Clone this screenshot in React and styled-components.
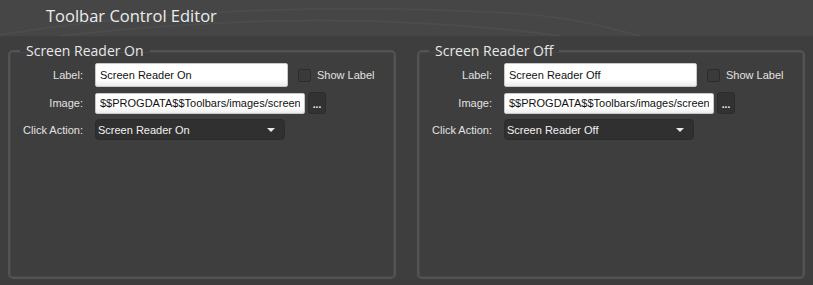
import React from "react";
import styled, { createGlobalStyle } from "styled-components";

const Global = createGlobalStyle`
  html, body {
    margin: 0;
    background: #3d3d3d;
  }
  body {
    font-family: "Open Sans", "DejaVu Sans", sans-serif;
    color: #e6e6e6;
  }
`;

const small = `"Liberation Sans", Arial, sans-serif`;

const panels = [
  {
    title: "Screen Reader On",
    label: "Screen Reader On",
    image: "$$PROGDATA$$Toolbars/images/screenreader_on.png",
    action: "Screen Reader On",
  },
  {
    title: "Screen Reader Off",
    label: "Screen Reader Off",
    image: "$$PROGDATA$$Toolbars/images/screenreader_off.png",
    action: "Screen Reader Off",
  },
];

function Waves() {
  return (
    <WaveArt viewBox="0 0 813 37" preserveAspectRatio="none">
      <path d="M0 36 C 140 12, 320 2, 520 14 C 570 18, 600 26, 640 37" />
      <path d="M60 37 C 200 20, 380 12, 560 37" />
    </WaveArt>
  );
}

function Group({ data }) {
  return (
    <Box>
      <Legend>{data.title}</Legend>
      <Form>
        <FieldLabel>Label:</FieldLabel>
        <Line>
          <TextInput $w={193} $h={24} readOnly value={data.label} />
          <Check>
            <Tick />
            Show Label
          </Check>
        </Line>

        <FieldLabel>Image:</FieldLabel>
        <Line>
          <TextInput $w={210} $h={21} readOnly value={data.image} />
          <Browse>...</Browse>
        </Line>

        <FieldLabel>Click Action:</FieldLabel>
        <Line>
          <Select>
            <span>{data.action}</span>
            <Arrow />
          </Select>
        </Line>
      </Form>
    </Box>
  );
}

export default function App() {
  return (
    <Page>
      <Global />
      <Header>
        <Waves />
        <Title>Toolbar Control Editor</Title>
      </Header>
      <Panels>
        {panels.map((p) => (
          <Group key={p.title} data={p} />
        ))}
      </Panels>
    </Page>
  );
}

const Page = styled.div`
  width: 813px;
  height: 285px;
  display: flex;
  flex-direction: column;
  background: #3c3d3c;
  overflow: hidden;
`;

const Header = styled.div`
  position: relative;
  height: 37px;
  flex: none;
  background: #464646;
  border-bottom: 1px solid #404040;
  display: flex;
  align-items: center;
  padding-left: 46px;
  box-sizing: border-box;
`;

const WaveArt = styled.svg`
  position: absolute;
  inset: 0;
  width: 100%;
  height: 100%;

  path {
    fill: none;
    stroke: rgba(255, 255, 255, 0.035);
    stroke-width: 2;
  }
`;

const Title = styled.h1`
  position: relative;
  margin: -6px 0 0 0;
  font-size: 16.5px;
  font-weight: 400;
  color: #ececec;
`;

const Panels = styled.div`
  display: flex;
  gap: 21px;
  padding: 5px 8px 0 8px;
  height: 242px;
  box-sizing: border-box;
  background: #3e3e3e;
`;

const Box = styled.fieldset`
  flex: 1;
  margin: 0;
  padding: 3px 0 0 0;
  min-width: 0;
  border: 2px solid #535353;
  border-radius: 5px;
  box-shadow: inset 0 0 0 1px #474747;
  background: #3e3e3e;
`;

const Legend = styled.legend`
  margin-left: 10px;
  padding: 0 6px;
  font-size: 14px;
  color: #e8e8e8;
  line-height: 18px;
`;

const Form = styled.div`
  display: grid;
  grid-template-columns: 73px 1fr;
  column-gap: 12px;
  row-gap: 5px;
  align-items: center;
`;

const FieldLabel = styled.div`
  font-family: ${small};
  font-size: 11px;
  color: #e2e2e2;
  text-align: right;
  white-space: nowrap;
`;

const Line = styled.div`
  display: flex;
  align-items: center;
`;

const TextInput = styled.input`
  width: ${(p) => p.$w}px;
  height: ${(p) => p.$h}px;
  box-sizing: border-box;
  padding: 0 4px;
  border: 1px solid #c8c8c8;
  border-radius: 2px;
  background: linear-gradient(#ffffff, #ffffff 70%, #ececec);
  font-family: ${small};
  font-size: 11px;
  color: #111;
  outline: none;
`;

const Check = styled.label`
  display: flex;
  align-items: center;
  gap: 6px;
  margin-left: 10px;
  font-family: ${small};
  font-size: 11px;
  color: #e2e2e2;
`;

const Tick = styled.span`
  width: 11px;
  height: 11px;
  border: 1px solid #2c2c2c;
  border-radius: 2px;
  background: #3a3a3a;
`;

const Browse = styled.div`
  width: 18px;
  height: 22px;
  margin-left: 3px;
  box-sizing: border-box;
  border: 1px solid #2c2c2c;
  border-radius: 3px;
  background: #323232;
  color: #f0f0f0;
  font-family: ${small};
  font-size: 10px;
  font-weight: 700;
  display: flex;
  align-items: flex-end;
  justify-content: center;
  padding-bottom: 5px;
  line-height: 6px;
`;

const Select = styled.div`
  width: 190px;
  height: 21px;
  box-sizing: border-box;
  display: flex;
  align-items: center;
  justify-content: space-between;
  padding: 0 9px 0 2px;
  border: 1px solid #2c2c2c;
  border-radius: 4px;
  background: #303030;
  font-family: ${small};
  font-size: 11px;
  color: #f0f0f0;
`;

const Arrow = styled.span`
  width: 0;
  height: 0;
  border-left: 4px solid transparent;
  border-right: 4px solid transparent;
  border-top: 4px solid #e8e8e8;
`;
